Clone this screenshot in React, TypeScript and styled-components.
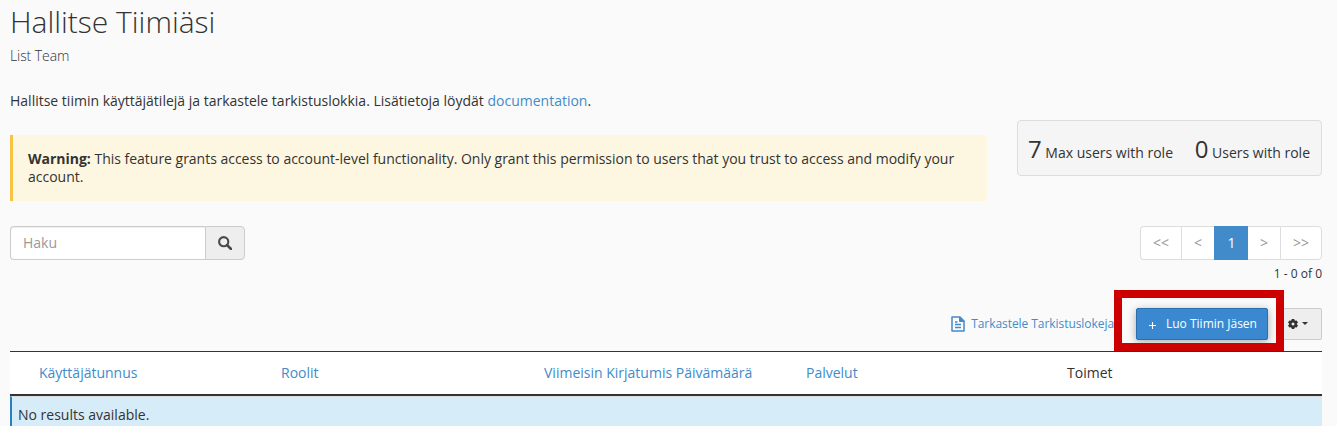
import React from 'react';
import styled, { createGlobalStyle, css } from 'styled-components';

const GlobalStyle = createGlobalStyle`
  *, *::before, *::after { box-sizing: border-box; }
  html, body { margin: 0; height: 100%; overflow: hidden; }
  body {
    background: #fafafa;
    color: #333;
    font: 400 14px/20px "Open Sans", sans-serif;
  }
`;

const Page = styled.main`
  display: flex;
  flex-direction: column;
  height: 426px;
  overflow: hidden;
  padding: 0 15px 0 10px;
  & > * { flex-shrink: 0; }
`;

const Title = styled.h1`
  margin: 0;
  padding-top: 1px;
  height: 46px;
  font-size: 30px;
  font-weight: 300;
  line-height: 42px;
`;

const Subtitle = styled.div`
  font-weight: 300;
  height: 20px;
  letter-spacing: -0.08px;
`;

const Intro = styled.p`
  margin: 25px 0 0;
  height: 20px;
`;

const Link = styled.a`
  color: #428bca;
  text-decoration: none;
`;

const NoticeRow = styled.section`
  display: flex;
  align-items: flex-start;
  justify-content: space-between;
  margin-top: 9px;
`;

const Warning = styled.div`
  width: 977px;
  height: 66px;
  margin-top: 15px;
  padding: 15px;
  border-left: 3px solid #f6c342;
  background: #fdf7e1;
  line-height: 18px;
  letter-spacing: -0.014px;
`;

const Stats = styled.div`
  display: flex;
  justify-content: space-between;
  width: 305px;
  height: 56px;
  padding: 11px 11px 9px 10px;
  border: 1px solid #ddd;
  border-radius: 4px;
  background: #f5f5f5;
  line-height: 34px;
  white-space: nowrap;
`;

const StatValue = styled.span`
  font-size: 24px;
`;

const ControlsRow = styled.section`
  display: flex;
  justify-content: space-between;
  align-items: flex-start;
  margin-top: 25px;
  height: 82px;
`;

const SearchGroup = styled.div`
  display: flex;
  width: 235px;
  height: 34px;
`;

const SearchInput = styled.input`
  flex: 1;
  min-width: 0;
  padding: 6px 12px;
  border: 1px solid #ccc;
  border-right: 0;
  border-radius: 4px 0 0 4px;
  background: #fff;
  box-shadow: inset 0 1px 1px rgba(0, 0, 0, 0.075);
  font: inherit;
  &::placeholder { color: #999; opacity: 1; }
`;

const SearchButton = styled.button`
  display: flex;
  align-items: center;
  justify-content: center;
  width: 40px;
  padding: 0;
  border: 1px solid #ccc;
  border-radius: 0 4px 4px 0;
  background: #eee;
  color: #4a4a4a;
`;

const PagerColumn = styled.div`
  display: flex;
  flex-direction: column;
  align-items: flex-end;
`;

const Pager = styled.nav`
  display: flex;
  height: 34px;
`;

const PageItem = styled.span<{ $width: number; $active?: boolean }>`
  width: ${({ $width }) => $width}px;
  border: 1px solid #ddd;
  border-right-width: 0;
  background: #fff;
  color: #999;
  line-height: 32px;
  text-align: center;
  &:first-child { border-radius: 4px 0 0 4px; }
  &:last-child { border-right-width: 1px; border-radius: 0 4px 4px 0; }
  ${({ $active }) => $active && css`
    border-color: #428bca;
    background: #428bca;
    color: #fff;
    & + span { border-left-width: 0; }
  `}
`;

const PageSummary = styled.div`
  margin-top: 5px;
  font-size: 12px;
  line-height: 18px;
`;

const Actions = styled.section`
  display: flex;
  justify-content: flex-end;
  height: 43px;
`;

const LogLink = styled(Link)`
  display: flex;
  align-items: center;
  gap: 6px;
  height: 32px;
  margin-right: 22px;
  font-size: 12px;
  letter-spacing: -0.06px;
  white-space: nowrap;
`;

const CreateWrap = styled.div`
  position: relative;
  width: 132px;
  height: 32px;
`;

const CreateButton = styled.button`
  display: flex;
  align-items: center;
  width: 132px;
  height: 32px;
  padding: 0 0 0 11px;
  gap: 9px;
  border: 1px solid #2a6fb0;
  border-radius: 2px;
  background: #3a89d0;
  box-shadow: 0 2px 8px rgba(0, 0, 0, 0.33);
  color: #fff;
  font: 400 12px/18px "Open Sans", sans-serif;
  white-space: nowrap;
`;

const Highlight = styled.div`
  position: absolute;
  z-index: 1;
  inset: -18px -16px -11px -22px;
  border: 8px solid #c00;
  pointer-events: none;
`;

const SettingsButton = styled.button`
  display: flex;
  align-items: center;
  justify-content: flex-end;
  gap: 4px;
  width: 44px;
  height: 32px;
  margin-left: 10px;
  padding: 0 13px 1px 0;
  border: 1px solid #ccc;
  border-radius: 2px;
  background: #eee;
  color: #333;
`;

const Caret = styled.span`
  border-top: 3px solid #333;
  border-left: 3px solid transparent;
  border-right: 3px solid transparent;
`;

const HeaderRow = styled.div`
  display: grid;
  grid-template-columns: 242px 263px 262px 261px 1fr;
  height: 45px;
  padding-left: 29px;
  border-top: 1px solid #333;
  border-bottom: 2px solid #333;
  background: #fff;
  line-height: 42px;
`;

const EmptyRow = styled.div`
  height: 40px;
  padding: 8px 6px;
  border-top: 1px solid #ddd;
  border-left: 2px solid #2a80b9;
  background: #d7ecf9;
`;

const SearchIcon = () => (
  <svg width="14" height="14" viewBox="0 0 14 14" fill="none" stroke="currentColor">
    <circle cx="5.7" cy="5.7" r="4.6" strokeWidth="2.1" />
    <path d="M9 9l4 4" strokeWidth="2.5" strokeLinecap="round" />
  </svg>
);

const DocumentIcon = () => (
  <svg width="14" height="16" viewBox="0 0 14 16" fill="none" stroke="currentColor">
    <path d="M1 1h8l4 4v10H1z" strokeWidth="1.5" strokeLinejoin="round" />
    <path d="M8.5 1v4.5H13z" fill="currentColor" strokeWidth="1" />
    <path d="M4 6h2.5M4 8.5h6M4 11.5h6" strokeWidth="1.3" />
  </svg>
);

const PlusIcon = () => (
  <svg width="9" height="11" viewBox="0 0 9 11" fill="none" stroke="currentColor">
    <path d="M4.5 3v7M1 6.5h7" strokeWidth="1.1" />
  </svg>
);

const GearIcon = () => (
  <svg width="10" height="10" viewBox="0 0 10 10">
    <g fill="currentColor">
      <rect x="3.6" y="0" width="2.8" height="10" rx=".4" />
      <rect x="3.6" y="0" width="2.8" height="10" rx=".4" transform="rotate(60 5 5)" />
      <rect x="3.6" y="0" width="2.8" height="10" rx=".4" transform="rotate(120 5 5)" />
    </g>
    <circle cx="5" cy="5" r="2.7" fill="#eee" stroke="currentColor" strokeWidth="2.4" />
  </svg>
);

export default function App() {
  return (
    <>
      <GlobalStyle />
      <Page>
        <Title>Hallitse Tiimiäsi</Title>
        <Subtitle>List Team</Subtitle>
        <Intro>
          Hallitse tiimin käyttäjätilejä ja tarkastele tarkistuslokkia. Lisätietoja löydät <Link>documentation</Link>.
        </Intro>

        <NoticeRow>
          <Warning>
            <strong>Warning:</strong> This feature grants access to account-level functionality. Only grant this
            permission to users that you trust to access and modify your account.
          </Warning>
          <Stats>
            <div><StatValue>7</StatValue> Max users with role</div>
            <div><StatValue>0</StatValue> Users with role</div>
          </Stats>
        </NoticeRow>

        <ControlsRow>
          <SearchGroup>
            <SearchInput placeholder="Haku" />
            <SearchButton aria-label="Haku"><SearchIcon /></SearchButton>
          </SearchGroup>
          <PagerColumn>
            <Pager>
              <PageItem $width={41}>&lt;&lt;</PageItem>
              <PageItem $width={33}>&lt;</PageItem>
              <PageItem $width={34} $active>1</PageItem>
              <PageItem $width={32}>&gt;</PageItem>
              <PageItem $width={42}>&gt;&gt;</PageItem>
            </Pager>
            <PageSummary>1 - 0 of 0</PageSummary>
          </PagerColumn>
        </ControlsRow>

        <Actions>
          <LogLink><DocumentIcon />Tarkastele Tarkistuslokeja</LogLink>
          <CreateWrap>
            <CreateButton><PlusIcon />Luo Tiimin Jäsen</CreateButton>
            <Highlight />
          </CreateWrap>
          <SettingsButton><GearIcon /><Caret /></SettingsButton>
        </Actions>

        <HeaderRow>
          <Link>Käyttäjätunnus</Link>
          <Link>Roolit</Link>
          <Link>Viimeisin Kirjatumis Päivämäärä</Link>
          <Link>Palvelut</Link>
          <span>Toimet</span>
        </HeaderRow>
        <EmptyRow>No results available.</EmptyRow>
      </Page>
    </>
  );
}
